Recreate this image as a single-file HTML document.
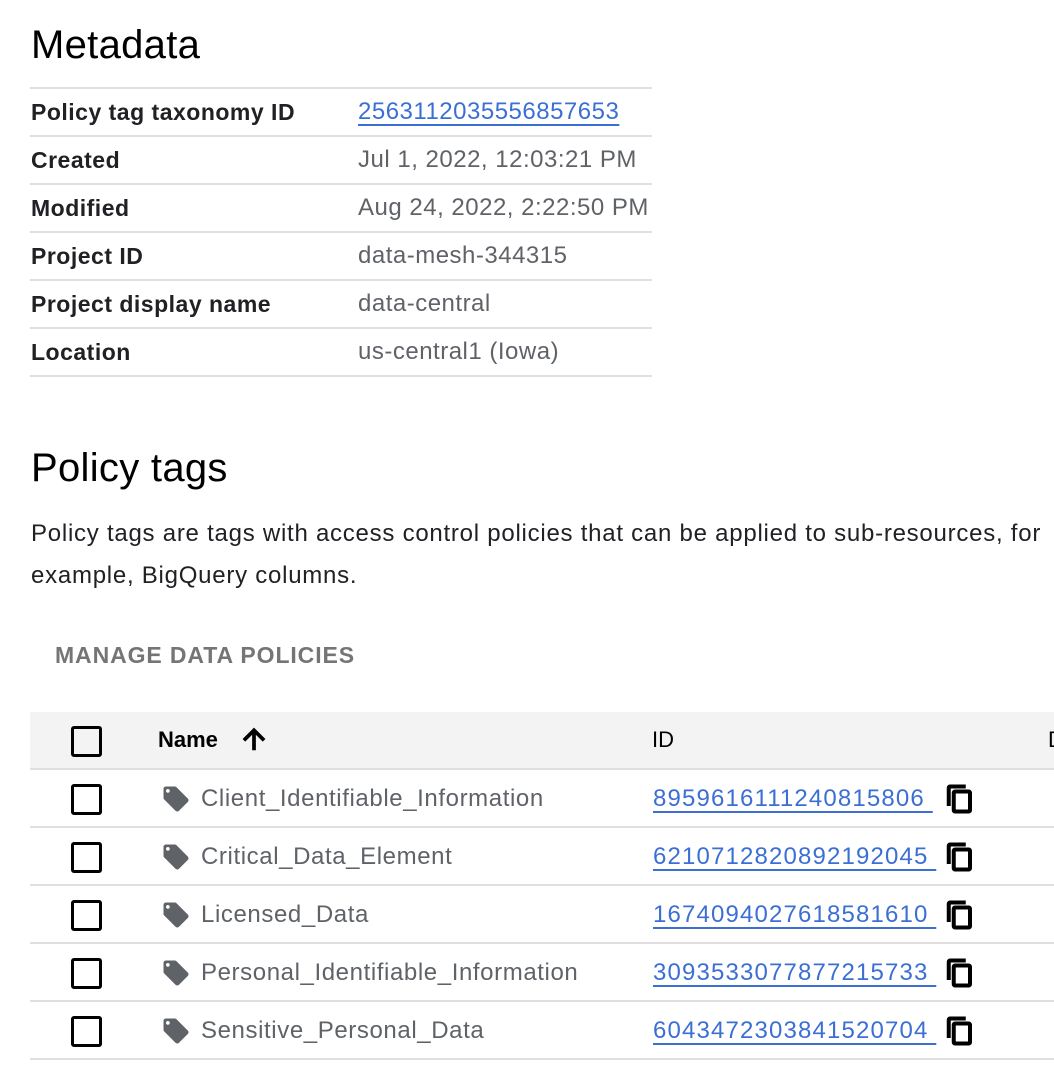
<!DOCTYPE html>
<html><head><style>
body{margin:0;width:1054px;height:1076px;overflow:hidden;background:#fff;font-family:"Liberation Sans",Arial,sans-serif;position:relative}
.a{position:absolute;white-space:nowrap}
h1{position:absolute;margin:0;font-weight:400;font-size:40px;color:#000;left:31px;letter-spacing:0.3px}
.mt{position:absolute;left:30px;width:622px;top:87px;border-top:2px solid #e0e0e0}
.mr{height:46px;border-bottom:2px solid #e0e0e0;position:relative;font-size:24px;line-height:46px;letter-spacing:0.5px}
.mr .l{position:absolute;left:1px;color:#202124;font-weight:bold;font-size:23px;letter-spacing:0.5px}
.mr .v{position:absolute;left:328px;color:#5f6368}
.mr .v.lnk,.lnk{color:#3b6fd4;text-decoration:underline;text-underline-offset:5px;text-decoration-thickness:2px}
.th{position:absolute;left:30px;top:712px;width:1024px;height:56px;background:#f3f3f3;border-bottom:2px solid #e0e0e0}
.cb{position:absolute;width:25px;height:25px;border:3px solid #000;border-radius:3px}
.row{position:absolute;left:30px;width:1024px;height:56px;border-bottom:2px solid #e0e0e0;font-size:24px;letter-spacing:0.6px}
</style></head><body>
<h1 style="top:23px">Metadata</h1>
<div class="mt">
<div class="mr"><span class="l">Policy tag taxonomy ID</span><span class="v lnk">2563112035556857653</span></div>
<div class="mr"><span class="l">Created</span><span class="v">Jul 1, 2022, 12:03:21 PM</span></div>
<div class="mr"><span class="l">Modified</span><span class="v">Aug 24, 2022, 2:22:50 PM</span></div>
<div class="mr"><span class="l">Project ID</span><span class="v">data-mesh-344315</span></div>
<div class="mr"><span class="l">Project display name</span><span class="v">data-central</span></div>
<div class="mr"><span class="l">Location</span><span class="v">us-central1 (Iowa)</span></div>
</div>
<h1 style="top:446px">Policy tags</h1>
<div class="a" style="left:31px;top:513px;font-size:24px;color:#202124;line-height:42px;letter-spacing:0.75px">Policy tags are tags with access control policies that can be applied to sub-resources, for<br>example, BigQuery columns.</div>
<div class="a" style="left:55px;top:642px;font-size:23px;color:#757575;font-weight:bold;letter-spacing:0.9px">MANAGE DATA POLICIES</div>
<div class="th">
<div class="cb" style="left:41px;top:14px"></div>
<span class="a" style="left:128px;top:15px;font-size:22px;font-weight:bold">Name</span>
<svg class="a" style="left:208px;top:11px" width="32" height="32" viewBox="0 0 24 24"><path d="M4 12l1.41 1.41L11 7.83V20h2V7.83l5.58 5.59L20 12l-8-8z" stroke="#000" stroke-width="0.8"/></svg>
<span class="a" style="left:622px;top:15px;font-size:22px">ID</span>
<span class="a" style="left:1018px;top:15px;font-size:22px">D</span>
</div>
<div class="row" style="top:770px"></div>
<div class="row" style="top:828px"></div>
<div class="row" style="top:886px"></div>
<div class="row" style="top:944px"></div>
<div class="row" style="top:1002px"></div>
<script>
var d=[["Client_Identifiable_Information","8959616111240815806"],["Critical_Data_Element","6210712820892192045"],["Licensed_Data","1674094027618581610"],["Personal_Identifiable_Information","3093533077877215733"],["Sensitive_Personal_Data","6043472303841520704"]];
var rs=document.querySelectorAll('.row');
d.forEach(function(r,i){rs[i].innerHTML='<div class="cb" style="left:41px;top:14px"></div>'+
'<svg class="a" style="left:131px;top:14px" width="30" height="30" viewBox="0 0 24 24"><path fill="#5f6368" d="M21.41 11.58l-9-9C12.05 2.22 11.55 2 11 2H4c-1.1 0-2 .9-2 2v7c0 .55.22 1.05.59 1.42l9 9c.36.36.86.58 1.41.58s1.05-.22 1.41-.59l7-7c.37-.36.59-.86.59-1.41s-.23-1.06-.59-1.42zM5.5 7C4.67 7 4 6.33 4 5.5S4.67 4 5.5 4 7 4.67 7 5.5 6.33 7 5.5 7z"/></svg>'+
'<span class="a" style="left:171px;top:15px;color:#5f6368">'+r[0]+'</span>'+
'<span class="a lnk" style="left:623px;top:15px;letter-spacing:1.15px">'+r[1]+'&nbsp;</span>'+
'<svg class="a" style="left:915px;top:14px" width="30" height="30" viewBox="0 0 24 24"><path d="M16 1H4c-1.1 0-2 .9-2 2v14h2V3h12V1zm3 4H8c-1.1 0-2 .9-2 2v14c0 1.1.9 2 2 2h11c1.1 0 2-.9 2-2V7c0-1.1-.9-2-2-2zm0 16H8V7h11v14z" stroke="#000" stroke-width="1.2"/></svg>';});
</script>
</body></html>
